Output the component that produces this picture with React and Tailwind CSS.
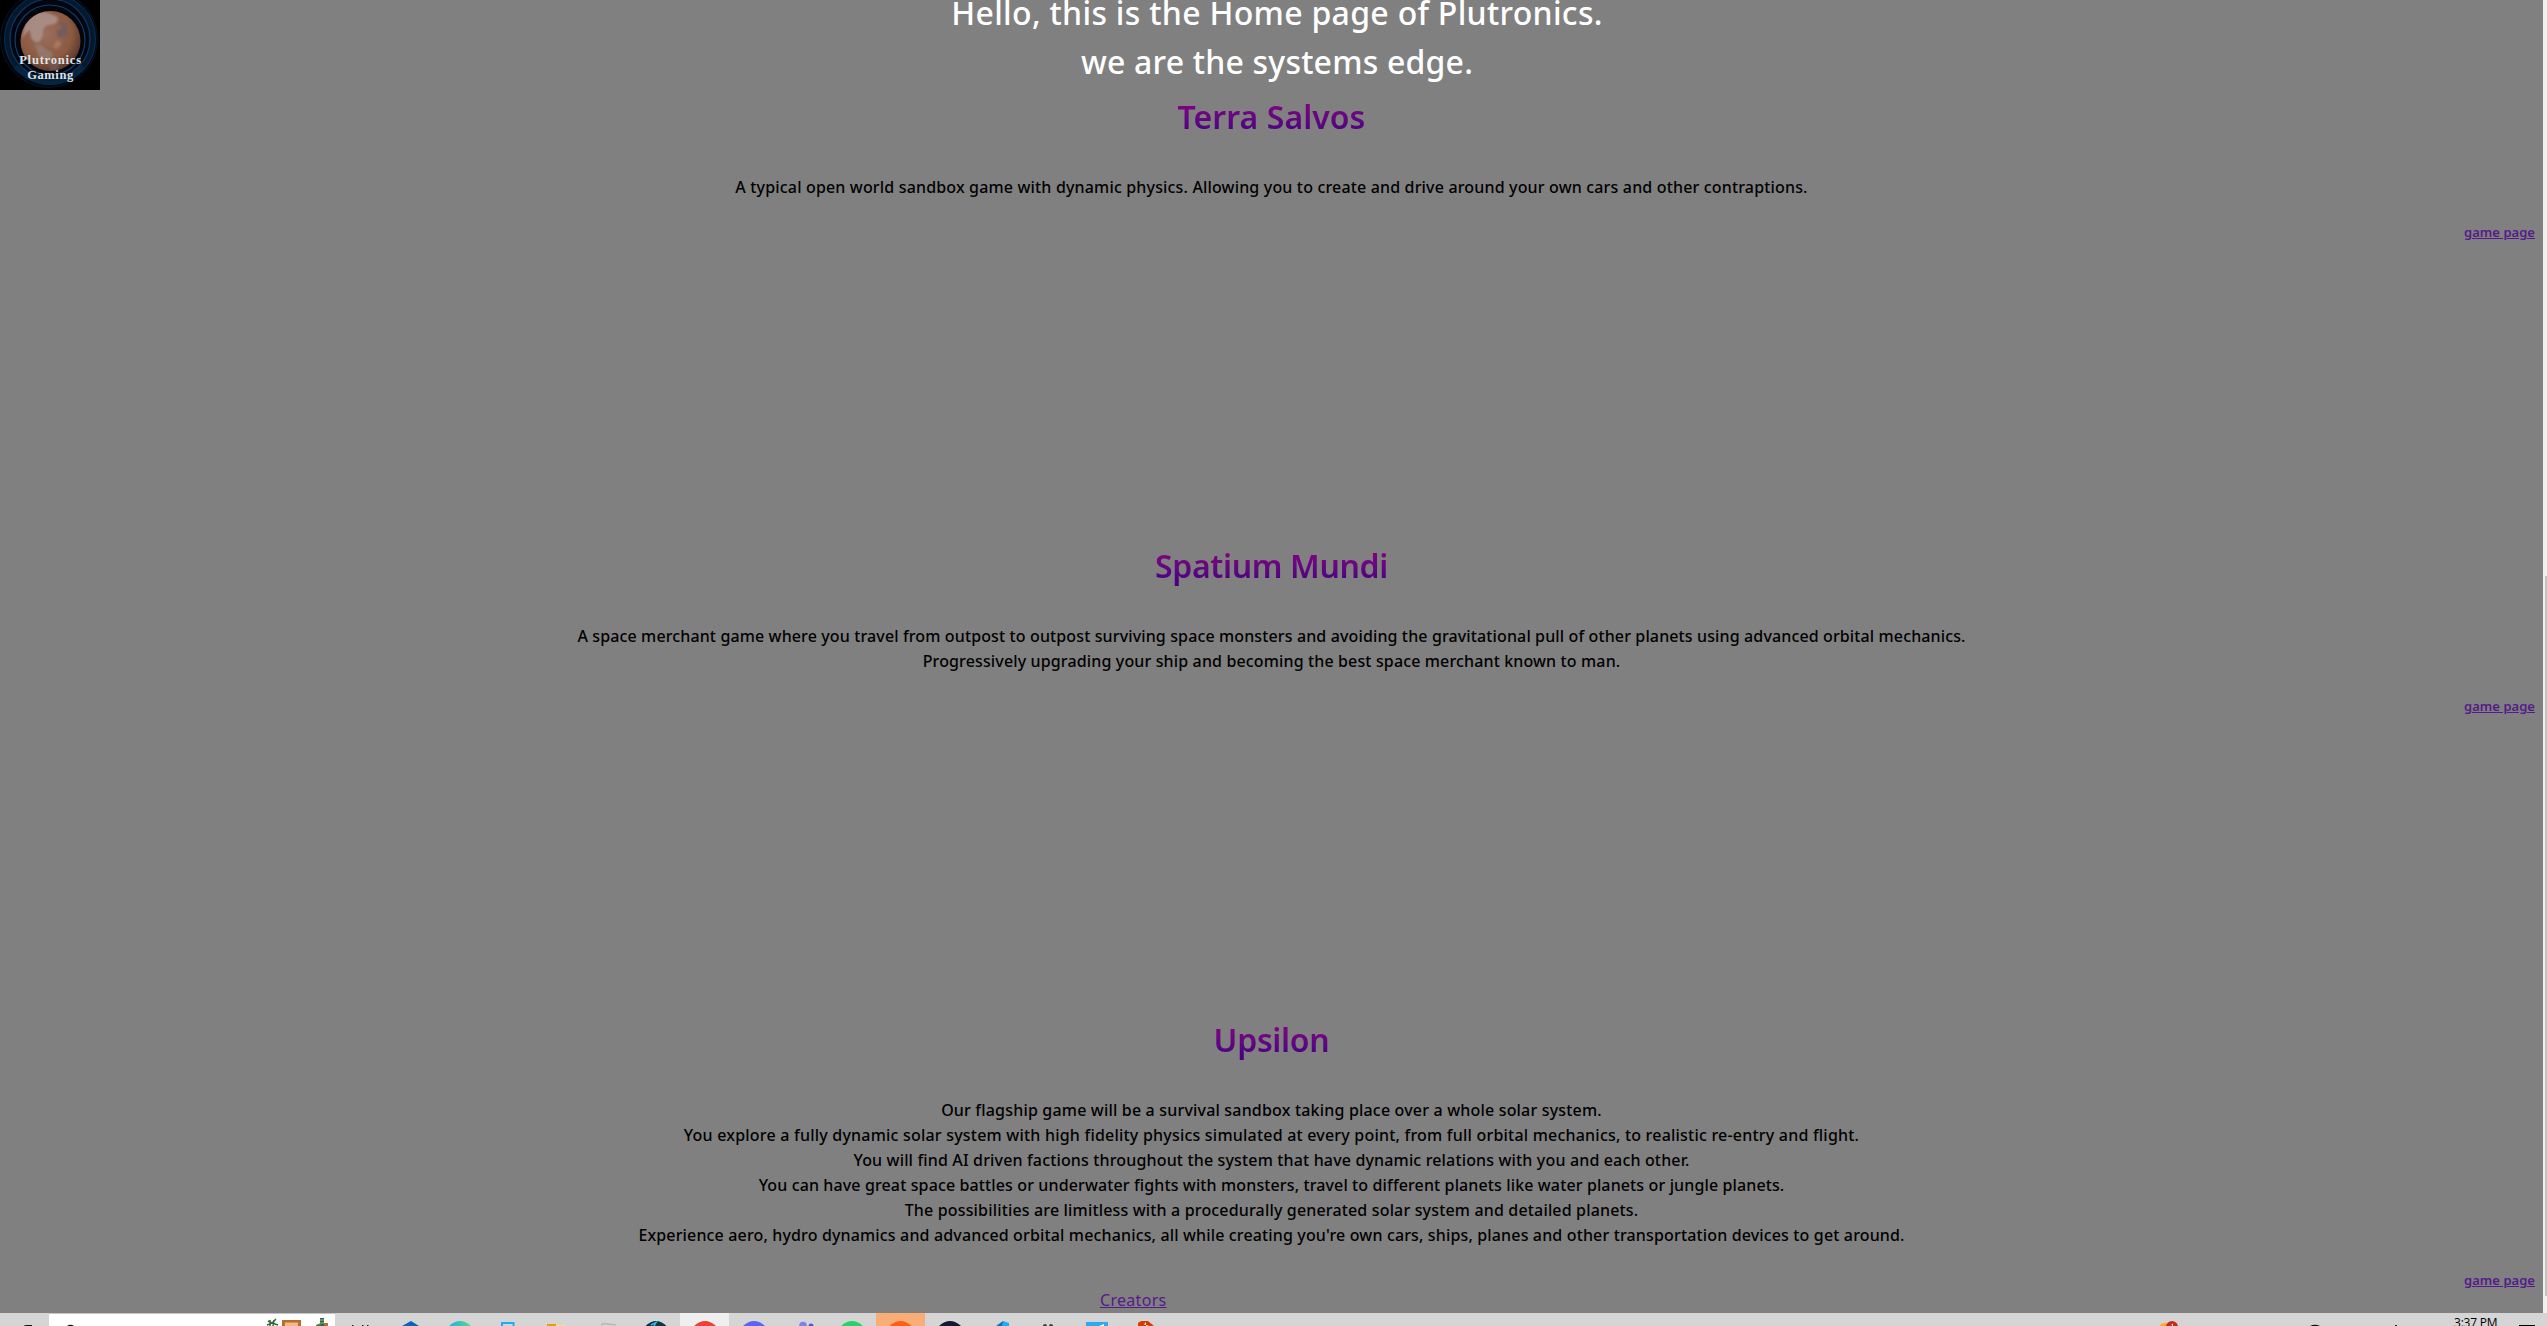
import React from 'react';

const games = [
  {
    title: 'Terra Salvos',
    tracking: 'tracking-[0.05px]',
    lines: [
      ['A typical open world sandbox game with dynamic physics. Allowing you to create and drive around your own cars and other contraptions.', 'tracking-[0.165px]'],
    ],
  },
  {
    title: 'Spatium Mundi',
    tracking: 'tracking-[-0.35px]',
    lines: [
      ['A space merchant game where you travel from outpost to outpost surviving space monsters and avoiding the gravitational pull of other planets using advanced orbital mechanics.', 'tracking-[0.128px]'],
      ['Progressively upgrading your ship and becoming the best space merchant known to man.', 'tracking-[0.14px]'],
    ],
  },
  {
    title: 'Upsilon',
    tracking: 'tracking-[-0.3px]',
    lines: [
      ['Our flagship game will be a survival sandbox taking place over a whole solar system.', 'tracking-[0.185px]'],
      ['You explore a fully dynamic solar system with high fidelity physics simulated at every point, from full orbital mechanics, to realistic re-entry and flight.', 'tracking-[0.212px]'],
      ['You will find AI driven factions throughout the system that have dynamic relations with you and each other.', 'tracking-[0.155px]'],
      ['You can have great space battles or underwater fights with monsters, travel to different planets like water planets or jungle planets.', 'tracking-[0.125px]'],
      ['The possibilities are limitless with a procedurally generated solar system and detailed planets.', 'tracking-[0.163px]'],
      ["Experience aero, hydro dynamics and advanced orbital mechanics, all while creating you're own cars, ships, planes and other transportation devices to get around.", 'tracking-[0.15px]'],
    ],
  },
];

function Logo() {
  return (
    <div className="absolute left-0 top-0 h-[90px] w-[100px] overflow-hidden bg-black">
      <svg className="absolute inset-0" width="100" height="90" viewBox="0 0 100 90">
        <defs>
          <radialGradient id="planet" cx="42%" cy="38%" r="62%">
            <stop offset="0" stopColor="#9c6e5c" />
            <stop offset="0.7" stopColor="#8b5a41" />
            <stop offset="1" stopColor="#5d3a2d" />
          </radialGradient>
          <clipPath id="disc"><circle cx="50.5" cy="41" r="30" /></clipPath>
          <filter id="soft"><feGaussianBlur stdDeviation="0.8" /></filter>
        </defs>
        <circle cx="49" cy="39" r="48.5" fill="#02050c" stroke="#071226" strokeWidth="1" />
        <circle cx="50" cy="39" r="43" fill="none" stroke="#04182e" strokeWidth="6" />
        <circle cx="50" cy="39" r="45.5" fill="none" stroke="#0a2c50" strokeWidth="1" />
        <circle cx="50" cy="39" r="40" fill="none" stroke="#0c3763" strokeWidth="1.2" />
        <circle cx="50" cy="40" r="35" fill="none" stroke="#0e3d70" strokeWidth="1.2" />
        <path d="M17 65Q49 96 82 65L85 69Q50 101 14 69Z" fill="#052541" />
        <circle cx="50.5" cy="41" r="30" fill="url(#planet)" />
        <g clipPath="url(#disc)" filter="url(#soft)">
          <path d="M25 24Q36 9 48 13L58 17Q58 25 50 25Q43 25 43 33Q42 44 35 42Q30 39 30 30Q25 33 22 40Z" fill="#aa9089" opacity=".9" />
          <path d="M59 21L67 24L68 35L59 38L56 31L62 29Z" fill="#6d5c60" opacity=".85" />
          <path d="M35 45Q42 43 45 49L53 53L51 60L39 57Z" fill="#94796f" opacity=".9" />
          <path d="M57 40L62 43L57 49L53 47Z" fill="#ab785f" />
          <path d="M49 62L60 59L58 70L50 70Z" fill="#735c5c" opacity=".7" />
        </g>
      </svg>
      <div className="absolute left-0 top-[53px] w-[101px] text-center font-['Liberation_Serif',serif] text-[12.5px] font-bold leading-[15px] text-[#dfe3e3]">
        <div className="tracking-[0.8px]">Plutronics</div>
        <div className="tracking-[0.6px]">Gaming</div>
      </div>
    </div>
  );
}

function GameLink() {
  return (
    <div className="mt-[23px] h-5 pr-2 text-right text-[13px] font-semibold leading-5">
      <a className="text-[#551a8b] underline decoration-1 underline-offset-1 tracking-[0.03px]">game page</a>
    </div>
  );
}

// Every glyph is drawn in a 49x13 cell: only the top edge of the bar is on screen.
const apps = [
  { id: 'tasks', art: <g fill="#222"><rect x="15" y="12" width="1.5" height="1" /><rect x="25" y="12" width="1.5" height="1" /><rect x="30" y="12" width="1.5" height="1" /></g> },
  { id: 'hex', art: <path d="M16 13L25 8L33 13Z" fill="#0a64b8" /> },
  { id: 'edge', art: <path d="M14 13Q25 3 36 13Z" fill="url(#edgeFill)" /> },
  { id: 'store', art: <path d="M18 14V10H29.5V14" fill="none" stroke="#18b0f3" strokeWidth="2" /> },
  { id: 'files', art: <g><path d="M20 12H32V13H20Z" fill="#ffdc80" /><path d="M14 11H23V13H14Z" fill="#e0a106" /></g> },
  { id: 'disk', art: <path d="M19 12L22 10.5L34 12" fill="none" stroke="#b7b7b7" strokeWidth="1.5" /> },
  { id: 'swirl', art: <g><path d="M14.5 13Q25 3 35.5 13Z" fill="#093747" /><path d="M20 12L25 9.500L23 13" stroke="#2bb9e8" strokeWidth="1.5" fill="none" /></g> },
  { id: 'chrome', bg: 'bg-[#efefef]', art: <path d="M14 13Q25 3 36 13Z" fill="#ea4335" /> },
  { id: 'discord', art: <path d="M14 13Q25 3 36 13Z" fill="#5865f2" /> },
  { id: 'teams', art: <g><circle cx="25" cy="12.5" r="3.8" fill="#7b83eb" /><circle cx="33" cy="13" r="2.5" fill="#5059c9" /></g> },
  { id: 'whatsapp', art: <path d="M14 13Q25 3 36 13Z" fill="#25d366" /> },
  { id: 'orange', bg: 'bg-[#f9ae77]', art: <path d="M13.500 13Q24.500 3 35.500 13Z" fill="#fb6014" /> },
  { id: 'navy', art: <path d="M14 13Q25 3 36 13Z" fill="#131b32" /> },
  { id: 'code', art: <g><path d="M22 13L29 8V13Z" fill="#0873b9" /><path d="M29 8L35 10V13H28Z" fill="#27a9f2" /></g> },
  { id: 'dots', art: <g fill="#3f3f3f"><circle cx="22" cy="13" r="2" /><circle cx="28" cy="13" r="2" /></g> },
  { id: 'board', art: <g><rect x="14" y="9" width="22" height="4" fill="#2baaf0" /><path d="M27 13L32 11V13Z" fill="#fff" /></g> },
  { id: 'git', art: <g><path d="M17 13V10L20 8H27L33 13Z" fill="#d83b01" /><path d="M25 9V13L28 12.500L23 11.500Z" fill="#fff" /></g> },
];

function Taskbar() {
  return (
    <div className="flex h-[13px] w-full shrink-0 overflow-hidden bg-[#d5d5d5]">
      <svg className="shrink-0" width="49" height="13" viewBox="0 0 49 13">
        <path d="M24 12.500L27 12H32V13H24Z" fill="#111" />
      </svg>
      <div className="h-[13px] w-[286px] shrink-0 border-t border-[#c4c4c4] bg-white">
        <svg width="286" height="12" viewBox="0 0 286 12">
          <path d="M18 12Q21.500 9.500 25 12Z" fill="#111" />
          <path d="M219 7L223 9L227 5M218 11L223 9L229 11M221 6V12M225 6L224 12" fill="none" stroke="#2e6b34" strokeWidth="1.5" />
          <rect x="233" y="6" width="19" height="6" fill="#b86c38" />
          <rect x="236" y="8.500" width="13" height="3.500" fill="#f7b97c" />
          <path d="M271 4H275V12H271Z" fill="#136873" />
          <path d="M271 6H275M271 9H275" stroke="#e5b52c" />
          <rect x="275" y="9" width="4" height="3" fill="#bd6938" />
          <path d="M267 11L272 9V12H267Z" fill="#547a3a" />
        </svg>
      </div>
      <div className="ml-[2px] flex">
        {apps.map((a) => (
          <div key={a.id} className={`w-[49px] shrink-0 ${a.bg || ''}`}>
            <svg width="49" height="13" viewBox="0 0 49 13">
              <defs>
                <linearGradient id="edgeFill"><stop stopColor="#2baee8" /><stop offset="1" stopColor="#52d98b" /></linearGradient>
              </defs>
              {a.art}
            </svg>
          </div>
        ))}
      </div>
      <div className="ml-auto flex">
        <svg width="294" height="13" viewBox="0 0 294 13">
          <circle cx="5" cy="17" r="7" fill="#f5ae22" />
          <circle cx="12" cy="14" r="6" fill="#c42b1c" />
          <path d="M11.500 11.500L12.500 11V13" fill="none" stroke="#fff" strokeWidth=".8" />
          <path d="M150 13Q155 10.500 160 13Z" fill="#111" />
          <rect x="235" y="12" width="2" height="1" fill="#222" />
        </svg>
        <div className="mt-[2px] h-[11px] w-[65px] overflow-hidden whitespace-nowrap font-['Open_Sans',sans-serif] text-[12px] leading-[16px] tracking-[-0.2px] text-black">
          3:37 PM
        </div>
        <div className="mr-3 mt-3 h-px w-4 bg-black" />
      </div>
    </div>
  );
}

export default function App() {
  return (
    <div className="flex h-[1326px] w-[2547px] flex-col overflow-hidden bg-[#808080] font-['Noto_Sans',sans-serif]">
      <div className="relative flex h-[1313px] overflow-hidden">
        <main className="w-[2543px] shrink-0">
          <header className="-mt-3 pl-[11px] text-center text-[32px] font-medium leading-[49px] text-white">
            <p className="tracking-[0.3px]">Hello, this is the Home page of Plutronics.</p>
            <p className="tracking-[0.2px]">we are the systems edge.</p>
          </header>
          {games.map((g, i) => (
            <section key={g.title} className={i === 0 ? 'mt-[6px]' : 'mt-[299px]'}>
              <h1 className="text-center text-[32px] font-semibold leading-[49px]">
                <span className={`inline-block bg-linear-to-b from-[#800080] from-25% to-[#4b0082] to-80% bg-clip-text text-transparent ${g.tracking}`}>{g.title}</span>
              </h1>
              <div className="mt-[34px] text-center text-base font-medium leading-[25px] text-black">
                {g.lines.map(([text, tracking]) => (
                  <p key={text} className={tracking}>{text}</p>
                ))}
              </div>
              <div className="-mt-px"><GameLink /></div>
            </section>
          ))}
          <div className="-mt-px ml-[1100px] text-base leading-[22px]">
            <a className="text-[#551a8b] underline decoration-1 underline-offset-1 tracking-[0.3px]">Creators</a>
          </div>
        </main>
        <div className="w-1 shrink-0 bg-[#f0f0f0] pl-[2px] pt-[576px]">
          <div className="h-[720px] bg-[#c1c1c1]" />
        </div>
        <Logo />
      </div>
      <Taskbar />
    </div>
  );
}
